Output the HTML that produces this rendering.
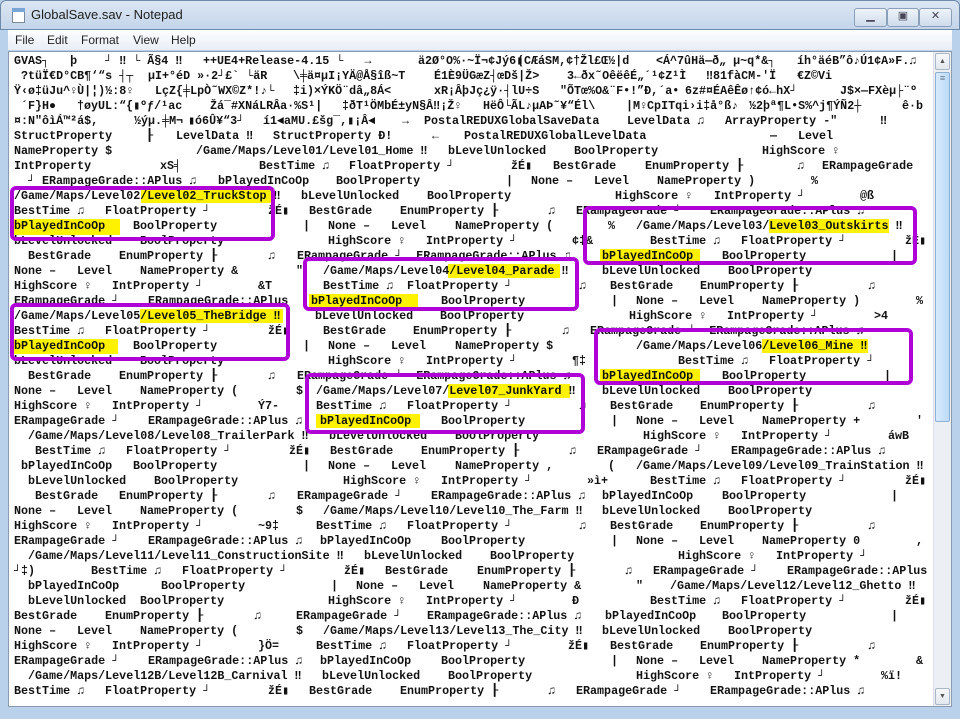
<!DOCTYPE html>
<html><head><meta charset="utf-8"><style>
*{margin:0;padding:0;box-sizing:border-box}
body{width:960px;height:719px;overflow:hidden;background:#b9d1ea;font-family:"Liberation Sans",sans-serif;position:relative}
.title{position:absolute;left:0;top:0;width:960px;height:30px;background:linear-gradient(#dbe6f3,#c4d5ea);border-radius:6px 6px 0 0;border:1px solid #6f8aa8}
.title .t{position:absolute;left:30px;top:6px;font-size:13px;color:#1e1e1e}
.ico{position:absolute;left:11px;top:7px;width:13px;height:15px;background:#fff;border:1px solid #7a8a9a}
.ico:before{content:"";position:absolute;left:-1px;top:-1px;width:13px;height:4px;background:#7aa6d6}
.btn{position:absolute;top:7px;height:19px;border:1px solid #8aa0b8;border-radius:3px;background:linear-gradient(#eef3f9,#cfdcec);font-size:11px;text-align:center;color:#445}
.menu{position:absolute;left:8px;top:30px;width:944px;height:20px;background:linear-gradient(#fdfeff,#e9eef5);font-size:12px;color:#222}
.menu span{position:absolute;top:3px}
.edit{position:absolute;left:8px;top:51px;width:944px;height:656px;background:#fff;border:1px solid #8a9bb0}
.sb{position:absolute;left:933px;top:52px;width:18px;height:654px;background:#eceff3;border-left:1px solid #dde}
.sb .up,.sb .dn{position:absolute;left:1px;width:15px;height:17px;border:1px solid #a9b6c4;border-radius:2px;background:linear-gradient(#f6f8fa,#e3e8ee);font-size:7px;text-align:center;line-height:15px;color:#555}
.sb .th{position:absolute;left:1px;top:20px;width:15px;height:350px;border:1px solid #8fb0d3;border-radius:2px;background:linear-gradient(90deg,#d8ebfb,#bcdaf6);font-size:9px;text-align:center;color:#678}
.tx{position:absolute;left:0;top:0;width:932px;height:706px;overflow:hidden;font-family:"Liberation Mono",monospace;font-weight:bold;font-size:11.7px;color:#111}
.r{position:absolute;left:0;width:932px;height:15px;line-height:15px;white-space:pre}
.r span{position:absolute;top:0}
.hl{position:absolute;background:#fff200}
.bx{position:absolute;border:4px solid #b000d8;border-radius:6px}
</style></head><body>
<div class="title"><div class="ico"></div><div class="t">GlobalSave.sav - Notepad</div>
<div class="btn" style="left:853px;width:33px">▁</div>
<div class="btn" style="left:886px;width:32px">▣</div>
<div class="btn" style="left:918px;width:33px">✕</div></div>
<div class="menu"><span style="left:7px">File</span><span style="left:39px">Edit</span><span style="left:73px">Format</span><span style="left:125px">View</span><span style="left:163px">Help</span></div>
<div class="edit"></div>
<div class="hl" style="left:141px;top:189px;width:130px;height:14px"></div>
<div class="hl" style="left:14px;top:219px;width:106px;height:16px"></div>
<div class="hl" style="left:769px;top:219px;width:120px;height:14px"></div>
<div class="hl" style="left:600px;top:249px;width:100px;height:14px"></div>
<div class="hl" style="left:448px;top:264px;width:112px;height:14px"></div>
<div class="hl" style="left:309px;top:294px;width:109px;height:14px"></div>
<div class="hl" style="left:140px;top:309px;width:143px;height:14px"></div>
<div class="hl" style="left:14px;top:339px;width:104px;height:15px"></div>
<div class="hl" style="left:762px;top:339px;width:106px;height:14px"></div>
<div class="hl" style="left:600px;top:369px;width:100px;height:14px"></div>
<div class="hl" style="left:448px;top:384px;width:122px;height:14px"></div>
<div class="hl" style="left:316px;top:414px;width:104px;height:14px"></div>
<div class="tx">
<div class="r" style="top:54px"><span style="left:14px">GVAS┐   þ    ┘ ‼ └ Ã§4 ‼</span><span style="left:203px">++UE4+Release-4.15 └   →</span><span style="left:418px">ä2Ø°O%·~Ï¬¢Jý6▮</span><span style="left:517px">(CÆáSM,¢†Žl£Œ½|d</span><span style="left:656px">&lt;Á^7ûHä—ð„ µ~q*&amp;┐</span><span style="left:797px">íh°äéB”ô♪Ú1¢A»F.♫</span></div>
<div class="r" style="top:69px"><span style="left:21px">?tüÏ€D°CB¶‘“s ┤┬</span><span style="left:148px">µI+°éD »·2┘£` └äR</span><span style="left:293px">\╪ä¤µI¡YÄ@Å§îß~T</span><span style="left:434px">É1È9ÜGæZ┤œDš|Ž&gt;</span><span style="left:567px">3←ðx˜OêëêÉ„´¹¢Z¹Ì</span><span style="left:706px">‼81fàCM-'Ï</span><span style="left:797px">€Z©Vi</span></div>
<div class="r" style="top:84px"><span style="left:14px">Ÿ‹ø‡üJu^♀Ù|¦)½:8♀</span><span style="left:155px">LçZ{╪LpÒ˜WX©Z*!♪└</span><span style="left:293px">‡i)×ÝKÖ¨dâ„8Á&lt;</span><span style="left:434px">xR¡ÂþJç¿ÿ·┤lU÷S</span><span style="left:560px">"ÕTœ%O&amp;¨F•!”Ð,´a•</span><span style="left:685px">6z#¤ÉAêÊø↑¢ó←hX┘</span><span style="left:840px">J$×—FXèµ├¨º</span></div>
<div class="r" style="top:99px"><span style="left:21px">´F}H●</span><span style="left:77px">†øyUL:“{▮ºƒ/¹ac</span><span style="left:210px">Žá¯#XNáLRÂa·%S¹|</span><span style="left:342px">‡ðT¹ÖMbÉ±yN§Â‼¡Ž♀</span><span style="left:483px">HëÔ└ÃL♪µAÞ˜¥“Él\</span><span style="left:626px">|M♀CpITqi›i‡å°ß♪</span><span style="left:749px">½2þª¶L•S%^j¶ÝÑ2┼</span><span style="left:902px">ê·b</span></div>
<div class="r" style="top:114px"><span style="left:14px">¤:N"ôìÁ™²á$,</span><span style="left:134px">½ýµ.╪M¬</span><span style="left:188px">▮ó6Û¥“3┘</span><span style="left:263px">í1◄aMU.£šg¯,▮¡Â◄</span><span style="left:402px">→</span><span style="left:424px">PostalREDUXGlobalSaveData</span><span style="left:627px">LevelData ♫</span><span style="left:725px">ArrayProperty -"</span><span style="left:880px">‼</span></div>
<div class="r" style="top:129px"><span style="left:14px">StructProperty</span><span style="left:146px">┠</span><span style="left:176px">LevelData ‼</span><span style="left:273px">StructProperty Ð!</span><span style="left:432px">←</span><span style="left:464px">PostalREDUXGlobalLevelData</span><span style="left:770px">—</span><span style="left:798px">Level</span></div>
<div class="r" style="top:144px"><span style="left:14px">NameProperty $</span><span style="left:196px">/Game/Maps/Level01/Level01_Home ‼</span><span style="left:448px">bLevelUnlocked</span><span style="left:574px">BoolProperty</span><span style="left:762px">HighScore ♀</span></div>
<div class="r" style="top:159px"><span style="left:14px">IntProperty</span><span style="left:160px">xS╡</span><span style="left:259px">BestTime ♫</span><span style="left:349px">FloatProperty ┘</span><span style="left:511px">žÉ▮</span><span style="left:553px">BestGrade</span><span style="left:645px">EnumProperty ┠</span><span style="left:797px">♫</span><span style="left:822px">ERampageGrade</span></div>
<div class="r" style="top:174px"><span style="left:28px">┘</span><span style="left:42px">ERampageGrade::APlus ♫</span><span style="left:218px">bPlayedInCoOp</span><span style="left:336px">BoolProperty</span><span style="left:506px">|</span><span style="left:531px">None –</span><span style="left:594px">Level</span><span style="left:657px">NameProperty )</span><span style="left:811px">%</span></div>
<div class="r" style="top:189px"><span style="left:14px">/Game/Maps/Level02/Level02_TruckStop ‼</span><span style="left:301px">bLevelUnlocked</span><span style="left:427px">BoolProperty</span><span style="left:615px">HighScore ♀</span><span style="left:714px">IntProperty ┘</span><span style="left:860px">@ß</span></div>
<div class="r" style="top:204px"><span style="left:14px">BestTime ♫</span><span style="left:105px">FloatProperty ┘</span><span style="left:268px">žÉ▮</span><span style="left:309px">BestGrade</span><span style="left:400px">EnumProperty ┠</span><span style="left:548px">♫</span><span style="left:576px">ERampageGrade ┘</span><span style="left:710px">ERampageGrade::APlus ♫</span></div>
<div class="r" style="top:219px"><span style="left:14px">bPlayedInCoOp</span><span style="left:133px">BoolProperty</span><span style="left:303px">|</span><span style="left:328px">None –</span><span style="left:391px">Level</span><span style="left:455px">NameProperty (</span><span style="left:608px">%</span><span style="left:636px">/Game/Maps/Level03/Level03_Outskirts ‼</span></div>
<div class="r" style="top:234px"><span style="left:14px">bLevelUnlocked</span><span style="left:140px">BoolProperty</span><span style="left:328px">HighScore ♀</span><span style="left:426px">IntProperty ┘</span><span style="left:572px">¢‡&amp;</span><span style="left:650px">BestTime ♫</span><span style="left:741px">FloatProperty ┘</span><span style="left:905px">žÉ▮</span></div>
<div class="r" style="top:249px"><span style="left:28px">BestGrade</span><span style="left:119px">EnumProperty ┠</span><span style="left:268px">♫</span><span style="left:297px">ERampageGrade ┘  ERampageGrade::APlus ♫</span><span style="left:602px">bPlayedInCoOp</span><span style="left:722px">BoolProperty</span><span style="left:891px">|</span></div>
<div class="r" style="top:264px"><span style="left:14px">None –</span><span style="left:77px">Level</span><span style="left:140px">NameProperty &amp;</span><span style="left:296px">"</span><span style="left:323px">/Game/Maps/Level04/Level04_Parade ‼</span><span style="left:602px">bLevelUnlocked</span><span style="left:728px">BoolProperty</span></div>
<div class="r" style="top:279px"><span style="left:14px">HighScore ♀</span><span style="left:112px">IntProperty ┘</span><span style="left:258px">&amp;T</span><span style="left:323px">BestTime ♫</span><span style="left:407px">FloatProperty ┘</span><span style="left:579px">♫</span><span style="left:610px">BestGrade</span><span style="left:700px">EnumProperty ┠</span><span style="left:868px">♫</span></div>
<div class="r" style="top:294px"><span style="left:14px">ERampageGrade ┘</span><span style="left:148px">ERampageGrade::APlus</span><span style="left:311px">bPlayedInCoOp</span><span style="left:441px">BoolProperty</span><span style="left:611px">|</span><span style="left:636px">None –</span><span style="left:699px">Level</span><span style="left:762px">NameProperty )</span><span style="left:916px">%</span></div>
<div class="r" style="top:309px"><span style="left:14px">/Game/Maps/Level05/Level05_TheBridge ‼</span><span style="left:315px">bLevelUnlocked</span><span style="left:440px">BoolProperty</span><span style="left:629px">HighScore ♀</span><span style="left:727px">IntProperty ┘</span><span style="left:874px">&gt;4</span></div>
<div class="r" style="top:324px"><span style="left:14px">BestTime ♫</span><span style="left:105px">FloatProperty ┘</span><span style="left:268px">žÉ▮</span><span style="left:323px">BestGrade</span><span style="left:413px">EnumProperty ┠</span><span style="left:562px">♫</span><span style="left:590px">ERampageGrade ┘  ERampageGrade::APlus ♫</span></div>
<div class="r" style="top:339px"><span style="left:14px">bPlayedInCoOp</span><span style="left:133px">BoolProperty</span><span style="left:303px">|</span><span style="left:328px">None –</span><span style="left:391px">Level</span><span style="left:455px">NameProperty $</span><span style="left:636px">/Game/Maps/Level06/Level06_Mine ‼</span></div>
<div class="r" style="top:354px"><span style="left:14px">bLevelUnlocked</span><span style="left:140px">BoolProperty</span><span style="left:328px">HighScore ♀</span><span style="left:426px">IntProperty ┘</span><span style="left:572px">¶‡</span><span style="left:678px">BestTime ♫</span><span style="left:769px">FloatProperty ┘</span></div>
<div class="r" style="top:369px"><span style="left:28px">BestGrade</span><span style="left:119px">EnumProperty ┠</span><span style="left:268px">♫</span><span style="left:297px">ERampageGrade ┘  ERampageGrade::APlus ♫</span><span style="left:602px">bPlayedInCoOp</span><span style="left:722px">BoolProperty</span><span style="left:884px">|</span></div>
<div class="r" style="top:384px"><span style="left:14px">None –</span><span style="left:77px">Level</span><span style="left:140px">NameProperty (</span><span style="left:296px">$</span><span style="left:316px">/Game/Maps/Level07/Level07_JunkYard ‼</span><span style="left:602px">bLevelUnlocked</span><span style="left:728px">BoolProperty</span></div>
<div class="r" style="top:399px"><span style="left:14px">HighScore ♀</span><span style="left:112px">IntProperty ┘</span><span style="left:258px">Ý7-</span><span style="left:316px">BestTime ♫</span><span style="left:407px">FloatProperty ┘</span><span style="left:579px">♫</span><span style="left:610px">BestGrade</span><span style="left:700px">EnumProperty ┠</span><span style="left:868px">♫</span></div>
<div class="r" style="top:414px"><span style="left:14px">ERampageGrade ┘</span><span style="left:148px">ERampageGrade::APlus ♫</span><span style="left:320px">bPlayedInCoOp</span><span style="left:441px">BoolProperty</span><span style="left:611px">|</span><span style="left:636px">None –</span><span style="left:699px">Level</span><span style="left:762px">NameProperty +</span><span style="left:916px">'</span></div>
<div class="r" style="top:429px"><span style="left:28px">/Game/Maps/Level08/Level08_TrailerPark ‼</span><span style="left:329px">bLevelUnlocked</span><span style="left:455px">BoolProperty</span><span style="left:643px">HighScore ♀</span><span style="left:741px">IntProperty ┘</span><span style="left:888px">áwB</span></div>
<div class="r" style="top:444px"><span style="left:35px">BestTime ♫</span><span style="left:126px">FloatProperty ┘</span><span style="left:289px">žÉ▮</span><span style="left:330px">BestGrade</span><span style="left:421px">EnumProperty ┠</span><span style="left:569px">♫</span><span style="left:597px">ERampageGrade ┘</span><span style="left:731px">ERampageGrade::APlus ♫</span></div>
<div class="r" style="top:459px"><span style="left:21px">bPlayedInCoOp</span><span style="left:133px">BoolProperty</span><span style="left:303px">|</span><span style="left:328px">None –</span><span style="left:391px">Level</span><span style="left:455px">NameProperty ,</span><span style="left:608px">(</span><span style="left:636px">/Game/Maps/Level09/Level09_TrainStation ‼</span></div>
<div class="r" style="top:474px"><span style="left:28px">bLevelUnlocked</span><span style="left:154px">BoolProperty</span><span style="left:343px">HighScore ♀</span><span style="left:441px">IntProperty ┘</span><span style="left:587px">»ì+</span><span style="left:650px">BestTime ♫</span><span style="left:741px">FloatProperty ┘</span><span style="left:905px">žÉ▮</span></div>
<div class="r" style="top:489px"><span style="left:35px">BestGrade</span><span style="left:119px">EnumProperty ┠</span><span style="left:268px">♫</span><span style="left:297px">ERampageGrade ┘</span><span style="left:431px">ERampageGrade::APlus ♫</span><span style="left:602px">bPlayedInCoOp</span><span style="left:722px">BoolProperty</span><span style="left:891px">|</span></div>
<div class="r" style="top:504px"><span style="left:14px">None –</span><span style="left:77px">Level</span><span style="left:140px">NameProperty (</span><span style="left:296px">$</span><span style="left:323px">/Game/Maps/Level10/Level10_The_Farm ‼</span><span style="left:602px">bLevelUnlocked</span><span style="left:728px">BoolProperty</span></div>
<div class="r" style="top:519px"><span style="left:14px">HighScore ♀</span><span style="left:112px">IntProperty ┘</span><span style="left:258px">~9‡</span><span style="left:316px">BestTime ♫</span><span style="left:407px">FloatProperty ┘</span><span style="left:579px">♫</span><span style="left:610px">BestGrade</span><span style="left:700px">EnumProperty ┠</span><span style="left:868px">♫</span></div>
<div class="r" style="top:534px"><span style="left:14px">ERampageGrade ┘</span><span style="left:148px">ERampageGrade::APlus ♫</span><span style="left:320px">bPlayedInCoOp</span><span style="left:441px">BoolProperty</span><span style="left:611px">|</span><span style="left:636px">None –</span><span style="left:699px">Level</span><span style="left:762px">NameProperty 0</span><span style="left:916px">,</span></div>
<div class="r" style="top:549px"><span style="left:28px">/Game/Maps/Level11/Level11_ConstructionSite ‼</span><span style="left:364px">bLevelUnlocked</span><span style="left:490px">BoolProperty</span><span style="left:678px">HighScore ♀</span><span style="left:776px">IntProperty ┘</span></div>
<div class="r" style="top:564px"><span style="left:14px">┘‡)</span><span style="left:91px">BestTime ♫</span><span style="left:182px">FloatProperty ┘</span><span style="left:344px">žÉ▮</span><span style="left:385px">BestGrade</span><span style="left:477px">EnumProperty ┠</span><span style="left:625px">♫</span><span style="left:653px">ERampageGrade ┘</span><span style="left:787px">ERampageGrade::APlus</span></div>
<div class="r" style="top:579px"><span style="left:28px">bPlayedInCoOp</span><span style="left:161px">BoolProperty</span><span style="left:331px">|</span><span style="left:356px">None –</span><span style="left:419px">Level</span><span style="left:483px">NameProperty &amp;</span><span style="left:636px">"</span><span style="left:670px">/Game/Maps/Level12/Level12_Ghetto ‼</span></div>
<div class="r" style="top:594px"><span style="left:28px">bLevelUnlocked</span><span style="left:140px">BoolProperty</span><span style="left:328px">HighScore ♀</span><span style="left:426px">IntProperty ┘</span><span style="left:572px">Ð</span><span style="left:650px">BestTime ♫</span><span style="left:741px">FloatProperty ┘</span><span style="left:905px">žÉ▮</span></div>
<div class="r" style="top:609px"><span style="left:14px">BestGrade</span><span style="left:105px">EnumProperty ┠</span><span style="left:254px">♫</span><span style="left:296px">ERampageGrade ┘</span><span style="left:427px">ERampageGrade::APlus ♫</span><span style="left:605px">bPlayedInCoOp</span><span style="left:722px">BoolProperty</span><span style="left:891px">|</span></div>
<div class="r" style="top:624px"><span style="left:14px">None –</span><span style="left:77px">Level</span><span style="left:140px">NameProperty (</span><span style="left:296px">$</span><span style="left:323px">/Game/Maps/Level13/Level13_The_City ‼</span><span style="left:602px">bLevelUnlocked</span><span style="left:728px">BoolProperty</span></div>
<div class="r" style="top:639px"><span style="left:14px">HighScore ♀</span><span style="left:112px">IntProperty ┘</span><span style="left:258px">}Ö=</span><span style="left:316px">BestTime ♫</span><span style="left:407px">FloatProperty ┘</span><span style="left:568px">žÉ▮</span><span style="left:610px">BestGrade</span><span style="left:700px">EnumProperty ┠</span><span style="left:868px">♫</span></div>
<div class="r" style="top:654px"><span style="left:14px">ERampageGrade ┘</span><span style="left:148px">ERampageGrade::APlus ♫</span><span style="left:320px">bPlayedInCoOp</span><span style="left:441px">BoolProperty</span><span style="left:611px">|</span><span style="left:636px">None –</span><span style="left:699px">Level</span><span style="left:762px">NameProperty *</span><span style="left:916px">&amp;</span></div>
<div class="r" style="top:669px"><span style="left:28px">/Game/Maps/Level12B/Level12B_Carnival ‼</span><span style="left:322px">bLevelUnlocked</span><span style="left:448px">BoolProperty</span><span style="left:636px">HighScore ♀</span><span style="left:734px">IntProperty ┘</span><span style="left:881px">%ï!</span></div>
<div class="r" style="top:684px"><span style="left:14px">BestTime ♫</span><span style="left:105px">FloatProperty ┘</span><span style="left:268px">žÉ▮</span><span style="left:309px">BestGrade</span><span style="left:400px">EnumProperty ┠</span><span style="left:548px">♫</span><span style="left:576px">ERampageGrade ┘</span><span style="left:710px">ERampageGrade::APlus ♫</span></div>
</div>
<div class="bx" style="left:10px;top:186px;width:265px;height:55px"></div>
<div class="bx" style="left:303px;top:257px;width:276px;height:54px"></div>
<div class="bx" style="left:583px;top:206px;width:334px;height:59px"></div>
<div class="bx" style="left:10px;top:303px;width:280px;height:58px"></div>
<div class="bx" style="left:594px;top:328px;width:319px;height:57px"></div>
<div class="bx" style="left:305px;top:373px;width:280px;height:61px"></div>
<div class="sb"><div class="up" style="top:1px">▲</div><div class="th">≡</div><div class="dn" style="bottom:1px">▼</div></div>
</body></html>
